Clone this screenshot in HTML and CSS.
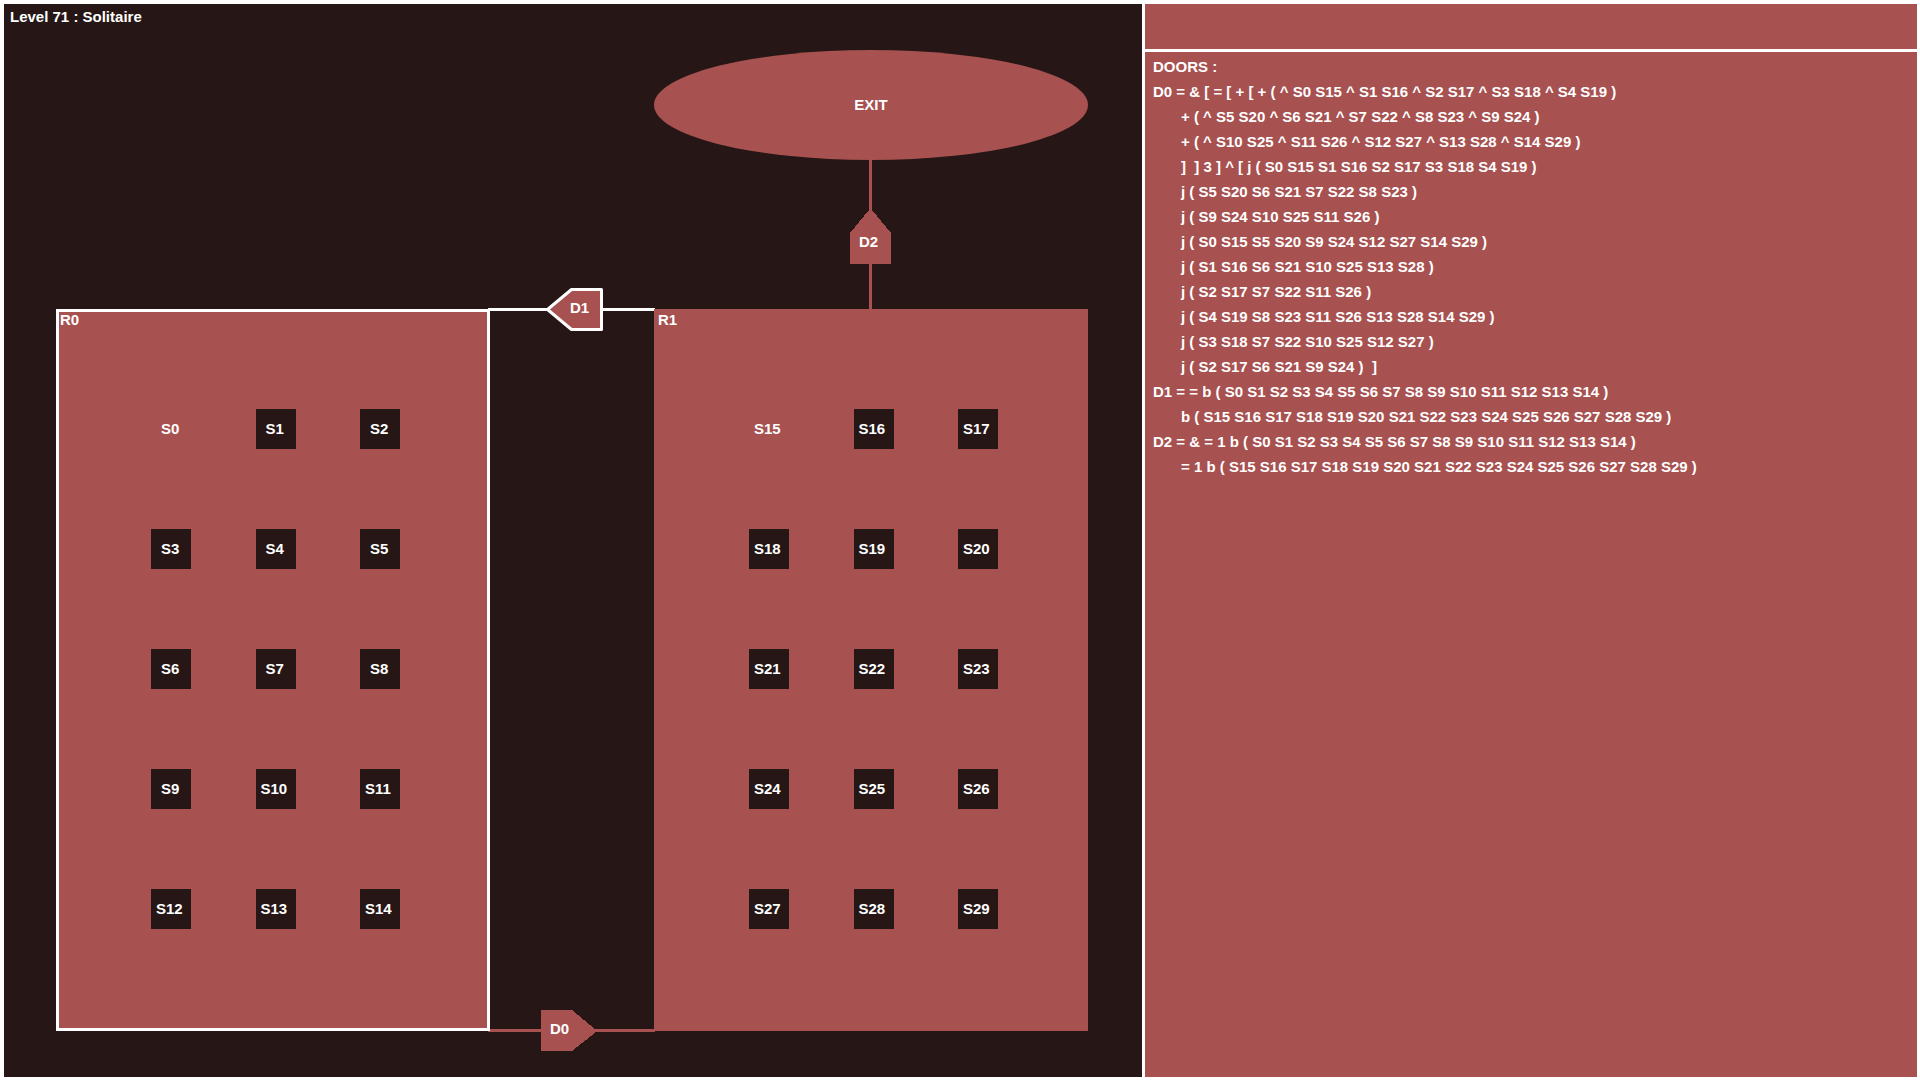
FILE: index.html
```html
<!DOCTYPE html>
<html lang="en">
<head>
<meta charset="utf-8">
<title>Level 71 : Solitaire</title>
<link rel="stylesheet" href="styles.css">
</head>
<body>
<div class="game">
  <main class="map">
    <h1 class="level">Level 71 : Solitaire</h1>

    <svg class="doors" aria-label="Doors">
      <g class="corridor">
        <path d="M865 156h3v149h-3z"/>
        <path d="M484 1025h167v3H484z"/>
        <path class="open" d="M484 304h167v3H484z"/>
      </g>
      <path class="door" d="M846 260V229L865 206H868L887 229V260z"/>
      <path class="door" d="M537 1006H568L592 1026V1028L568 1047H537z"/>
      <path class="door door-open" d="M543.5 305.5L567.5 285.5H597.5V325.5H567.5z"/>
      <text class="door-label" x="855" y="243">D2</text>
      <text class="door-label" x="566" y="309">D1</text>
      <text class="door-label" x="546" y="1030">D0</text>
    </svg>

    <div class="exit">EXIT</div>

    <section class="room room-current room-0">
      <h2 class="room-name">R0</h2>
      <div class="switches">
        <button class="switch on">S0</button><button class="switch">S1</button><button class="switch">S2</button>
        <button class="switch">S3</button><button class="switch">S4</button><button class="switch">S5</button>
        <button class="switch">S6</button><button class="switch">S7</button><button class="switch">S8</button>
        <button class="switch">S9</button><button class="switch wide">S10</button><button class="switch wide">S11</button>
        <button class="switch wide">S12</button><button class="switch wide">S13</button><button class="switch wide">S14</button>
      </div>
    </section>

    <section class="room room-1">
      <h2 class="room-name">R1</h2>
      <div class="switches">
        <button class="switch wide on">S15</button><button class="switch wide">S16</button><button class="switch wide">S17</button>
        <button class="switch wide">S18</button><button class="switch wide">S19</button><button class="switch wide">S20</button>
        <button class="switch wide">S21</button><button class="switch wide">S22</button><button class="switch wide">S23</button>
        <button class="switch wide">S24</button><button class="switch wide">S25</button><button class="switch wide">S26</button>
        <button class="switch wide">S27</button><button class="switch wide">S28</button><button class="switch wide">S29</button>
      </div>
    </section>
  </main>

  <aside class="side">
    <div class="message"></div>
    <div class="rules">
      <h2 class="rule">DOORS :</h2>
      <p class="rule">D0 = &amp; [ = [ + [ + ( ^ S0 S15 ^ S1 S16 ^ S2 S17 ^ S3 S18 ^ S4 S19 )</p>
      <p class="rule more">+ ( ^ S5 S20 ^ S6 S21 ^ S7 S22 ^ S8 S23 ^ S9 S24 )</p>
      <p class="rule more">+ ( ^ S10 S25 ^ S11 S26 ^ S12 S27 ^ S13 S28 ^ S14 S29 )</p>
      <p class="rule more">]  ] 3 ] ^ [ j ( S0 S15 S1 S16 S2 S17 S3 S18 S4 S19 )</p>
      <p class="rule more">j ( S5 S20 S6 S21 S7 S22 S8 S23 )</p>
      <p class="rule more">j ( S9 S24 S10 S25 S11 S26 )</p>
      <p class="rule more">j ( S0 S15 S5 S20 S9 S24 S12 S27 S14 S29 )</p>
      <p class="rule more">j ( S1 S16 S6 S21 S10 S25 S13 S28 )</p>
      <p class="rule more">j ( S2 S17 S7 S22 S11 S26 )</p>
      <p class="rule more">j ( S4 S19 S8 S23 S11 S26 S13 S28 S14 S29 )</p>
      <p class="rule more">j ( S3 S18 S7 S22 S10 S25 S12 S27 )</p>
      <p class="rule more">j ( S2 S17 S6 S21 S9 S24 )  ]</p>
      <p class="rule">D1 = = b ( S0 S1 S2 S3 S4 S5 S6 S7 S8 S9 S10 S11 S12 S13 S14 )</p>
      <p class="rule more">b ( S15 S16 S17 S18 S19 S20 S21 S22 S23 S24 S25 S26 S27 S28 S29 )</p>
      <p class="rule">D2 = &amp; = 1 b ( S0 S1 S2 S3 S4 S5 S6 S7 S8 S9 S10 S11 S12 S13 S14 )</p>
      <p class="rule more">= 1 b ( S15 S16 S17 S18 S19 S20 S21 S22 S23 S24 S25 S26 S27 S28 S29 )</p>
    </div>
  </aside>
</div>
</body>
</html>
```
FILE: styles.css
```css
:root {
  --red: #a75150;
  --dark: #261716;
  --white: #fff;
}

* {
  box-sizing: border-box;
}

body {
  margin: 0;
  color: var(--white);
  font: bold 15px/25px "Liberation Sans", Arial, sans-serif;
}

h1,
h2,
p {
  margin: 0;
  font: inherit;
}

/* The white background shows through the padding and gaps as the frame. */
.game {
  display: grid;
  grid-template-columns: 1138fr 772fr;
  gap: 3px;
  min-height: 100vh;
  padding: 4px 3px 3px 4px;
  background: var(--white);
}

.map {
  position: relative;
  overflow: hidden;
  min-height: 1040px;
  background: var(--dark);
}

.level {
  padding-left: 6px;
}

/* Map canvas */
.doors {
  position: absolute;
  inset: 0;
  width: 100%;
  height: 100%;
  fill: var(--red);
}

.open {
  fill: var(--white);
}

.door {
  shape-rendering: crispEdges;
}

.door-open {
  stroke: var(--white);
  stroke-width: 3px;
  stroke-linejoin: round;
  shape-rendering: auto;
}

.door-label {
  fill: var(--white);
}

.exit {
  position: absolute;
  top: 46px;
  left: 650px;
  display: grid;
  place-items: center;
  width: 434px;
  height: 110px;
  padding-bottom: 2px;
  border-radius: 50%;
  background: var(--red);
}

.room {
  position: absolute;
  top: 305px;
  width: 434px;
  border: 3px solid var(--red);
  background: var(--red);
}

.room-0 {
  left: 52px;
}

.room-1 {
  left: 650px;
}

.room-current {
  border-color: var(--white);
}

.room-name {
  padding-left: 1px;
  line-height: 16px;
}

.switches {
  display: grid;
  grid-template-columns: repeat(3, 40px);
  justify-content: space-between;
  row-gap: 80px;
  padding: 81px 87px 99px 92px;
}

.switch {
  height: 40px;
  padding: 0 0 2px 10px;
  border: 0;
  background: var(--dark);
  color: inherit;
  font: inherit;
  text-align: left;
}

.wide {
  padding-left: 5px;
}

.on {
  background: var(--red);
}

/* Side panel */
.side {
  display: grid;
  grid-template-rows: 45px 1fr;
  gap: 3px;
}

.message,
.rules {
  background: var(--red);
}

.rules {
  padding: 2px 8px;
}

.rule {
  white-space: pre;
}

.more {
  padding-left: 28px;
}
```
